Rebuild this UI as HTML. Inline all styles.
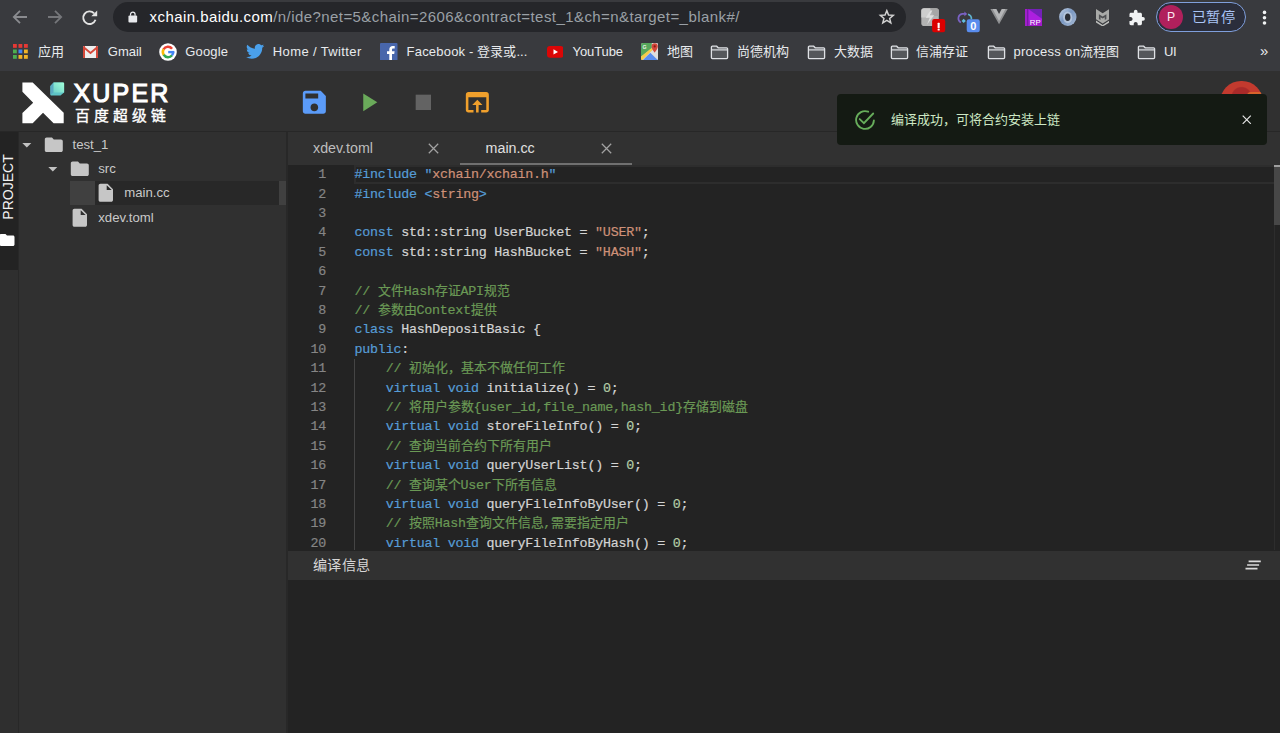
<!DOCTYPE html>
<html lang="zh-CN">
<head>
<meta charset="utf-8">
<title>XUPER IDE</title>
<style>
*{box-sizing:border-box;margin:0;padding:0}
html,body{width:1280px;height:733px;overflow:hidden;background:#232323}
body{font-family:"Liberation Sans",sans-serif;color:#ddd;position:relative}
.abs{position:absolute}
svg{display:block}
/* ---------- browser chrome ---------- */
#chrome{position:absolute;left:0;top:0;width:1280px;height:71px;background:#393a3e}
#omni{position:absolute;left:113px;top:2px;width:793px;height:30px;border-radius:15px;background:#25262a}
#url{position:absolute;left:149.6px;top:0;height:34px;line-height:34px;font-size:15px;letter-spacing:.43px;color:#9aa0a6;white-space:nowrap}
#url b{font-weight:normal;color:#fff}
.bm{position:absolute;top:36px;height:31px;line-height:31px;font-size:13px;color:#e8eaed;white-space:nowrap}
.bmi{position:absolute}
#prof{position:absolute;left:1156px;top:2.2px;width:90px;height:30px;border-radius:15px;border:1.3px solid #7f9fdc;background:#2b2e3b}
#prof .av{position:absolute;left:1.9px;top:1.6px;width:24.2px;height:24.2px;border-radius:50%;background:#b0205c;color:#fbe9f0;font-size:12.2px;line-height:25px;text-align:center}
#prof .tx{position:absolute;left:35px;top:1px;line-height:27.4px;font-size:14.2px;color:#a9c4f5;white-space:nowrap}
/* ---------- app ---------- */
#hdr{position:absolute;left:0;top:71px;width:1280px;height:60.5px;background:#303030}
#hdrline{position:absolute;left:0;top:131.2px;width:1280px;height:1.1px;background:#272727}
#act{position:absolute;left:0;top:132px;width:17.5px;height:601px;background:#2f2f2f}
#acttab{position:absolute;left:0;top:132px;width:17.5px;height:137.8px;background:#232323}
#side{position:absolute;left:17.5px;top:132px;width:269px;height:601px;background:#303030;border-left:1px solid #282828}
#sideline{position:absolute;left:286px;top:132px;width:1.5px;height:601px;background:#282828}
.trow{position:absolute;font-size:13.2px;color:#c9c9c9;white-space:nowrap;line-height:24.3px;height:24.3px}
#tabs{position:absolute;left:287.5px;top:132.2px;width:993px;height:32.5px;background:#313131}
.tab{position:absolute;top:.3px;height:32px;line-height:33px;font-size:14.25px;color:#bdbdbd;white-space:nowrap}
#editor{position:absolute;left:287.5px;top:164.7px;width:993px;height:385.8px;background:#232323;overflow:hidden}
.ln{position:absolute;left:0;width:38.5px;text-align:right;color:#858585}
.cl{position:absolute;left:67.1px;white-space:pre;color:#d4d4d4}
.ln,.cl{font-family:"Liberation Mono",monospace;font-size:13.33px;letter-spacing:-.24px;height:19.39px;line-height:19.39px;margin-top:.6px;-webkit-text-stroke:.2px}
.z{font-size:12.9px;letter-spacing:0}.j{display:inline-block;text-align:justify;text-align-last:justify;white-space:nowrap}.k{color:#569cd6}.s{color:#ce9178}.c{color:#6a9955}.n{color:#b5cea8}
#phead{position:absolute;left:287.5px;top:550.5px;width:993px;height:29.3px;background:#313131}
#pbody{position:absolute;left:287.5px;top:579.8px;width:993px;height:153.2px;background:#232323}
/* ---------- toast ---------- */
#toast{position:absolute;left:836.5px;top:93.7px;width:430.2px;height:51px;border-radius:4px;background:#141a13}
</style>
</head>
<body>

<!-- ================= BROWSER CHROME ================= -->
<div id="chrome">
  <div id="omni"></div>
  <div id="url"><b>xchain.baidu.com</b>/n/ide?net=5&amp;chain=2606&amp;contract=test_1&amp;ch=n&amp;target=_blank#/</div>

  <!-- nav buttons -->
  <svg class="abs" style="left:12px;top:9px" width="16" height="16" viewBox="0 0 16 16"><path d="M15 8H2.2M8 1.8L1.8 8 8 14.2" fill="none" stroke="#8a8b8f" stroke-width="1.8"/></svg>
  <svg class="abs" style="left:47px;top:9px" width="16" height="16" viewBox="0 0 16 16"><path d="M1 8h12.8M8 1.8L14.2 8 8 14.2" fill="none" stroke="#75767a" stroke-width="1.8"/></svg>
  <svg class="abs" style="left:81px;top:9px" width="17" height="17" viewBox="0 0 17 17"><path d="M13.1 4.3A6.3 6.3 0 1 0 14.5 10.8" fill="none" stroke="#e3e3e3" stroke-width="1.9"/><path d="M16.2 1.4v5.9h-5.9z" fill="#e3e3e3"/></svg>
  <!-- lock -->
  <svg class="abs" style="left:128.1px;top:11.2px" width="9.6" height="12.2" viewBox="0 0 11 14"><rect x="0.5" y="5.2" width="10" height="8" rx="1.2" fill="#e8eaed"/><path d="M2.9 5.5V3.8a2.6 2.6 0 0 1 5.2 0v1.7" fill="none" stroke="#e8eaed" stroke-width="1.4"/></svg>
  <!-- star -->
  <svg class="abs" style="left:878.4px;top:8px" width="17.6" height="17.6" viewBox="0 0 24 24"><path d="M12.0 3.6L14.4 9.6L20.8 10.0L15.9 14.2L17.5 20.4L12.0 17.0L6.5 20.4L8.1 14.2L3.2 10.0L9.6 9.6Z" fill="none" stroke="#d2d2d2" stroke-width="2" stroke-linejoin="miter"/></svg>
  <!-- ext 1: grey card with bolt + red badge -->
  <svg class="abs" style="left:920px;top:7px" width="26" height="26" viewBox="0 0 26 26"><rect x="1.3" y="1.3" width="17.5" height="17.8" rx="2.8" fill="#b3b3b3"/><path d="M1.3 4.1a2.8 2.8 0 0 1 2.8-2.8h6.5L8 10.5H1.3z" fill="#cdcdcd"/><path d="M10.6 1.3h5.4a2.8 2.8 0 0 1 2.8 2.8v5L13.5 9z" fill="#a6a6a6"/><path d="M10.2 3.5L5.8 10.8h4L7 17.5l7.2-9.3h-4.4l2.5-4.7z" fill="#dedede"/><rect x="12.1" y="12" width="13.1" height="13.2" rx="2.2" fill="#dc0000"/><rect x="17.6" y="15.8" width="2.1" height="5.4" rx=".5" fill="#fff"/><rect x="17.6" y="21.8" width="2.1" height="1.6" rx=".5" fill="#fff"/></svg>
  <!-- ext 2: sync arrows + blue badge -->
  <svg class="abs" style="left:956px;top:7px" width="26" height="26" viewBox="0 0 26 26"><g transform="translate(-.3 1.3)"><path d="M5.2 14.1A4.5 4.5 0 0 1 6.5 5.6H9.2" fill="none" stroke="#7a62c4" stroke-width="1.7"/><path d="M8.7 3.2l2.800 2.4-2.800 2.4z" fill="#7a62c4"/><path d="M12.4 5.9a5 5 0 0 1 3.3 5.2" fill="none" stroke="#5fb4d0" stroke-width="1.7"/><path d="M8 10.5l2.1 2.1L8 14.7l-2.1-2.1z" fill="#62bfe0"/></g><rect x="10.7" y="12.2" width="13.1" height="13" rx="2.2" fill="#5a8dee"/><text x="17.25" y="22.8" font-family="Liberation Sans" font-size="11" font-weight="bold" fill="#fff" text-anchor="middle">0</text></svg>
  <!-- ext 3: V -->
  <svg class="abs" style="left:989.9px;top:8.4px" width="18.1" height="16.7" viewBox="0 0 22 18" preserveAspectRatio="none"><path d="M.5 1h5L11 10.5 16.5 1h5L11 17.5z" fill="#8f9092"/><path d="M3.2 1h4.6L11 6.5 14.2 1h4.6L11 14z" fill="#b4b5b7"/></svg>
  <!-- ext 4: RP -->
  <svg class="abs" style="left:1024.8px;top:8.6px" width="17.3" height="17.3" viewBox="0 0 19 19"><rect width="19" height="19" fill="#ad1fe0"/><path d="M3.6 0H19V11z" fill="#7420b8"/><path d="M0 0h2.6v19H0z" fill="#a11fc9"/><path d="M2.6 0h1v19h-1z" fill="#5d1390"/><path d="M3.6 13h15.4v6H3.6z" fill="#9a1bbd" opacity=".6"/><text x="11.3" y="17.3" font-family="Liberation Sans" font-size="8.6" fill="#fff" text-anchor="middle">RP</text></svg>
  <!-- ext 5: ring -->
  <svg class="abs" style="left:1059px;top:8px" width="17.6" height="18" viewBox="0 0 17.6 18"><defs><linearGradient id="rg" x1="0" y1="0" x2="1" y2="1"><stop offset="0" stop-color="#c9d6e8"/><stop offset=".45" stop-color="#7b98c2"/><stop offset="1" stop-color="#a9bcd6"/></linearGradient></defs><ellipse cx="8.8" cy="9" rx="8.7" ry="8.9" fill="url(#rg)"/><ellipse cx="8.7" cy="9.4" rx="4.6" ry="5.8" fill="#d5deeb" opacity=".55"/><ellipse cx="8.7" cy="9.3" rx="2.7" ry="3.8" fill="#2b2e36"/></svg>
  <!-- ext 6: shield -->
  <svg class="abs" style="left:1095.9px;top:8.6px" width="13.3" height="17.6" viewBox="0 0 13.3 17.6"><path d="M0 0L6.65 4.3 13.3 0V10.2L6.65 14.5 0 10.2z" fill="#a9aaa8"/><path d="M2.9 5.2L6.65 7.6 10.4 5.2V10l-1.6 1V8.2L6.65 9.6 4.5 8.2V11l-1.6-1z" fill="#505154"/><path d="M0 11.6L6.65 15.9 13.3 11.6v1.9L6.65 17.6 0 13.5z" fill="#bdbebc"/></svg>
  <!-- ext 7: puzzle -->
  <svg class="abs" style="left:1127.8px;top:8.6px" width="17.6" height="17.6" viewBox="0 0 24 24"><path d="M20.5 11H19V7c0-1.1-.9-2-2-2h-4V3.5a2.5 2.5 0 0 0-5 0V5H4c-1.1 0-2 .9-2 2v3.8h1.5c1.5 0 2.7 1.2 2.7 2.7S5 16.2 3.5 16.2H2V20c0 1.1.9 2 2 2h3.8v-1.5c0-1.5 1.2-2.7 2.7-2.7s2.7 1.2 2.7 2.7V22H17c1.1 0 2-.9 2-2v-4h1.5a2.5 2.5 0 0 0 0-5z" fill="#f1f3f4"/></svg>
  <!-- menu dots -->
  <svg class="abs" style="left:1262.4px;top:9.5px" width="5" height="16" viewBox="0 0 5 16"><circle cx="2.5" cy="2.4" r="1.8" fill="#f1f3f4"/><circle cx="2.5" cy="7.7" r="1.8" fill="#f1f3f4"/><circle cx="2.5" cy="13" r="1.8" fill="#f1f3f4"/></svg>

  <!-- bookmarks bar -->
  <svg class="bmi" style="left:13px;top:43.8px" width="15" height="15" viewBox="0 0 15 15"><g><rect x="0" y="0" width="3.8" height="3.8" fill="#e53935"/><rect x="5.5" y="0" width="3.8" height="3.8" fill="#e53935"/><rect x="11" y="0" width="3.8" height="3.8" fill="#e53935"/><rect x="0" y="5.5" width="3.8" height="3.8" fill="#4caf50"/><rect x="5.5" y="5.5" width="3.8" height="3.8" fill="#4285f4"/><rect x="11" y="5.5" width="3.8" height="3.8" fill="#f0b429"/><rect x="0" y="11" width="3.8" height="3.8" fill="#4caf50"/><rect x="5.5" y="11" width="3.8" height="3.8" fill="#f0b429"/><rect x="11" y="11" width="3.8" height="3.8" fill="#f0b429"/></g></svg>
  <div class="bm" style="left:38px"><span class="j" style="width:26px">应用</span></div>
  <svg class="bmi" style="left:83px;top:45.5px" width="15" height="12.5" viewBox="0 0 15 12.5"><rect x="0" y="0" width="15" height="12.5" rx="1" fill="#eee"/><path d="M0 1a1 1 0 0 1 1-1h1v12.5H1a1 1 0 0 1-1-1zM15 1a1 1 0 0 0-1-1h-1v12.5h1a1 1 0 0 0 1-1z" fill="#d5483a"/><path d="M1 .2l6.5 5.6L14 .2v2.6L7.5 8.2 1 2.8z" fill="#d5483a"/></svg>
  <div class="bm" style="left:107.8px;letter-spacing:-0.03px">Gmail</div>
  <svg class="bmi" style="left:158.5px;top:43px" width="18" height="18" viewBox="0 0 18 18"><circle cx="9" cy="9" r="8.8" fill="#fff"/><path d="M13.06 5.83A5.15 5.15 0 0 0 4.54 6.43" fill="none" stroke="#ea4335" stroke-width="2.5"/><path d="M4.63 6.27A5.15 5.15 0 0 0 4.78 11.95" fill="none" stroke="#fbbc05" stroke-width="2.5"/><path d="M4.68 11.8A5.15 5.15 0 0 0 13.06 12.17" fill="none" stroke="#34a853" stroke-width="2.5"/><path d="M12.95 12.31A5.15 5.15 0 0 0 14.15 8.82" fill="none" stroke="#4285f4" stroke-width="2.5"/><path d="M9.2 7.9h6.1v2.4H9.2z" fill="#4285f4"/></svg>
  <div class="bm" style="left:185.3px;letter-spacing:.15px">Google</div>
  <svg class="bmi" style="left:246.2px;top:44.3px" width="18.2" height="15" viewBox="0 0 24 20"><path d="M24 2.4a9.6 9.6 0 0 1-2.8.8A5 5 0 0 0 23.3.5a9.8 9.8 0 0 1-3.1 1.2 4.9 4.9 0 0 0-8.4 4.5A14 14 0 0 1 1.7 1a4.9 4.9 0 0 0 1.5 6.6 4.9 4.9 0 0 1-2.2-.6 4.9 4.9 0 0 0 3.9 4.9 4.9 4.9 0 0 1-2.2.1 4.9 4.9 0 0 0 4.6 3.4A9.9 9.9 0 0 1 0 17.4 14 14 0 0 0 7.5 19.6c9.1 0 14-7.5 14-14v-.6A10 10 0 0 0 24 2.4z" fill="#4aa0eb"/></svg>
  <div class="bm" style="left:272.8px;letter-spacing:.38px">Home / Twitter</div>
  <svg class="bmi" style="left:380px;top:42.8px" width="17.5" height="17.5" viewBox="0 0 17.5 17.5"><rect width="17.5" height="17.5" rx="1" fill="#4866ab"/><path d="M12 17.5v-6.5h2.2l.4-2.7H12V6.7c0-.8.3-1.3 1.4-1.3h1.3V3a17 17 0 0 0-2-.1c-2 0-3.4 1.2-3.4 3.5v1.9H7v2.7h2.3v6.5z" fill="#fff"/></svg>
  <div class="bm" style="left:406.6px"><span style="letter-spacing:.2px">Facebook - </span><span class="j" style="width:39px">登录或</span>...</div>
  <svg class="bmi" style="left:546.5px;top:45.8px" width="16.5" height="11.8" viewBox="0 0 16.5 11.8"><rect width="16.5" height="11.8" rx="3" fill="#db0606"/><path d="M6.5 3.3l4.5 2.6-4.5 2.6z" fill="#fff"/></svg>
  <div class="bm" style="left:572.5px;letter-spacing:-.1px">YouTube</div>
  <svg class="bmi" style="left:640.5px;top:43.3px" width="17.5" height="17" viewBox="0 0 17.5 17"><rect width="17.5" height="17" rx="2" fill="#dedede"/><path d="M0 2a2 2 0 0 1 2-2h8.8v5.3L0 14z" fill="#57a85c"/><path d="M0 13.6L10.6 5l1.5 1.6L1.3 17H1a1 1 0 0 1-1-1z" fill="#f5cb4a"/><path d="M2 17l7.3-7.2L16.7 17z" fill="#5a8dee"/><path d="M13.7.3a3.1 3.1 0 0 0-3.1 3.1c0 2.3 3.1 6.2 3.1 6.2s3.1-3.9 3.1-6.2A3.1 3.1 0 0 0 13.7.3z" fill="#d4483b"/><circle cx="13.7" cy="3.4" r="1.1" fill="#8a1c14"/><text x="1.4" y="6.2" font-family="Liberation Sans" font-weight="bold" font-size="5.2" fill="#e8f3e8">G</text></svg>
  <div class="bm" style="left:666.9px"><span class="j" style="width:26px">地图</span></div>
  <svg class="bmi" style="left:709.5px;top:44.5px" width="19" height="15" viewBox="0 0 19 15"><path d="M1.4 2.2c0-.6.4-1 1-1h4.3l1.5 1.6h8.4c.6 0 1 .4 1 1v8.8c0 .6-.4 1-1 1H2.4c-.6 0-1-.4-1-1z" fill="#55575b" stroke="#dfe1e5" stroke-width="1.3"/><path d="M1.4 4.9h16.2" stroke="#dfe1e5" stroke-width="1.2"/></svg>
  <div class="bm" style="left:736.9px"><span class="j" style="width:52px">尚德机构</span></div>
  <svg class="bmi" style="left:806.5px;top:44.5px" width="19" height="15" viewBox="0 0 19 15"><path d="M1.4 2.2c0-.6.4-1 1-1h4.3l1.5 1.6h8.4c.6 0 1 .4 1 1v8.8c0 .6-.4 1-1 1H2.4c-.6 0-1-.4-1-1z" fill="#55575b" stroke="#dfe1e5" stroke-width="1.3"/><path d="M1.4 4.9h16.2" stroke="#dfe1e5" stroke-width="1.2"/></svg>
  <div class="bm" style="left:833.75px"><span class="j" style="width:39px">大数据</span></div>
  <svg class="bmi" style="left:889.5px;top:44.5px" width="19" height="15" viewBox="0 0 19 15"><path d="M1.4 2.2c0-.6.4-1 1-1h4.3l1.5 1.6h8.4c.6 0 1 .4 1 1v8.8c0 .6-.4 1-1 1H2.4c-.6 0-1-.4-1-1z" fill="#55575b" stroke="#dfe1e5" stroke-width="1.3"/><path d="M1.4 4.9h16.2" stroke="#dfe1e5" stroke-width="1.2"/></svg>
  <div class="bm" style="left:916.25px"><span class="j" style="width:52px">信浦存证</span></div>
  <svg class="bmi" style="left:986.5px;top:44.5px" width="19" height="15" viewBox="0 0 19 15"><path d="M1.4 2.2c0-.6.4-1 1-1h4.3l1.5 1.6h8.4c.6 0 1 .4 1 1v8.8c0 .6-.4 1-1 1H2.4c-.6 0-1-.4-1-1z" fill="#55575b" stroke="#dfe1e5" stroke-width="1.3"/><path d="M1.4 4.9h16.2" stroke="#dfe1e5" stroke-width="1.2"/></svg>
  <div class="bm" style="left:1013.4px"><span style="letter-spacing:.32px">process on</span><span class="j" style="width:39px">流程图</span></div>
  <svg class="bmi" style="left:1137px;top:44.5px" width="19" height="15" viewBox="0 0 19 15"><path d="M1.4 2.2c0-.6.4-1 1-1h4.3l1.5 1.6h8.4c.6 0 1 .4 1 1v8.8c0 .6-.4 1-1 1H2.4c-.6 0-1-.4-1-1z" fill="#55575b" stroke="#dfe1e5" stroke-width="1.3"/><path d="M1.4 4.9h16.2" stroke="#dfe1e5" stroke-width="1.2"/></svg>
  <div class="bm" style="left:1164px;letter-spacing:-.5px">UI</div>
  <div class="bm" style="left:1260px;font-size:15px;top:35px">»</div>
  <div id="prof"><div class="av">P</div><div class="tx j" style="width:42.6px">已暂停</div></div>
</div>

<!-- ================= APP ================= -->
<div id="hdr">
  <!-- logo -->
  <svg class="abs" style="left:22px;top:10.5px" width="43" height="42" viewBox="0 0 43 42"><defs><linearGradient id="cg" x1="0" y1="1" x2="1" y2="0"><stop offset="0" stop-color="#6fd2c8"/><stop offset="1" stop-color="#a2ffd9"/></linearGradient></defs><path d="M.4.5H10.7L41.7 30.7V41.3H31.6L21 30.7 10.7 41.3H.4V31L11.2 20.7.4 9.7Z" fill="#fff"/><path d="M31.6.4H41a1.1 1.1 0 0 1 1.1 1.1V10.4L38.5 13.5H29.2a.8.8 0 0 1-.8-.8V4Z" fill="#5ec4c6"/><path d="M31.6.4L28.4 4V12.7l3.2-2.2Z" fill="#5aaac2"/><path d="M31.6.4H41a1.1 1.1 0 0 1 1.1 1.1V10.4H31.6Z" fill="url(#cg)"/></svg>
  <div class="abs" style="left:73.4px;top:7.4px;font-size:25px;line-height:30px;letter-spacing:2.2px;color:#fff;white-space:nowrap;-webkit-text-stroke:1.1px #fff">XUPER</div>
  <div class="abs" style="left:74.7px;top:34.8px;width:91.4px;font-size:14.8px;line-height:20px;color:#fff;white-space:nowrap;text-align:justify;text-align-last:justify;-webkit-text-stroke:0.4px #fff">百度超级链</div>
  <svg class="abs" style="left:299.15px;top:15.95px" width="30.7" height="30.7" viewBox="0 0 24 24"><path d="M17 3H5c-1.11 0-2 .9-2 2v14c0 1.1.89 2 2 2h14c1.1 0 2-.9 2-2V7l-4-4zm-5 16c-1.66 0-3-1.34-3-3s1.34-3 3-3 3 1.34 3 3-1.34 3-3 3zm3-10H5V5h10v4z" fill="#5b9bf8"/></svg>
  <svg class="abs" style="left:353.45px;top:15.95px" width="30.7" height="30.7" viewBox="0 0 24 24"><path d="M8 5v14l11-7z" fill="#6aaa5a"/></svg>
  <svg class="abs" style="left:407.75px;top:15.95px" width="30.7" height="30.7" viewBox="0 0 24 24"><path d="M6 6h12v12H6z" fill="#636363"/></svg>
  <svg class="abs" style="left:462.05px;top:15.95px" width="30.7" height="30.7" viewBox="0 0 24 24"><path d="M19 4H5c-1.11 0-2 .9-2 2v12c0 1.1.89 2 2 2h4v-2H5V8h14v10h-4v2h4c1.1 0 2-.9 2-2V6c0-1.1-.89-2-2-2zm-7 6l-4 4h3v6h2v-6h3l-4-4z" fill="#f0a02c"/></svg>
  <div class="abs" style="left:1220px;top:9.6px;width:42.5px;height:42.5px;border-radius:50%;overflow:hidden;background:radial-gradient(circle at 50% 38%,#a92a29 0,#a92a29 9.3px,#c33a2e 10.6px,#c33a2e 100%)"><div class="abs" style="left:27px;top:11px;width:18px;height:8px;background:#d8622b;border-radius:4px 0 0 0"></div></div>
</div>
<div id="hdrline"></div>
<div id="act"></div>
<div id="acttab">
  <div class="abs" style="left:-24.9px;top:45.8px;width:65.3px;height:18px;line-height:18px;font-size:14px;color:#f2f2f2;transform:rotate(-90deg);transform-origin:50% 50%;white-space:nowrap;text-align:center">PROJECT</div>
  <svg class="abs" style="left:-2px;top:98.8px" width="18" height="18" viewBox="0 0 24 24"><path d="M10 4H4c-1.1 0-2 .9-2 2v12c0 1.1.9 2 2 2h16c1.1 0 2-.9 2-2V8c0-1.1-.9-2-2-2h-8l-2-2z" fill="#fff"/></svg>
</div>
<div id="side">
  <div class="abs" style="left:51.5px;top:48.8px;width:217px;height:24.7px;background:#282828"></div>
  <div class="abs" style="left:51.5px;top:48.8px;width:25.1px;height:24.7px;background:#404040"></div>
  <div class="abs" style="left:260.5px;top:48.8px;width:7.3px;height:24.7px;background:#404040"></div>
  <svg class="abs" style="left:-2.3px;top:1.8px" width="21.6" height="21.6" viewBox="0 0 24 24"><path d="M7 10l5 5 5-5z" fill="#c2c2c2"/></svg>
  <svg class="abs" style="left:24.45px;top:1.8px" width="21.6" height="21.6" viewBox="0 0 24 24"><path d="M10 4H4c-1.1 0-2 .9-2 2v12c0 1.1.9 2 2 2h16c1.1 0 2-.9 2-2V8c0-1.1-.9-2-2-2h-8l-2-2z" fill="#c6c6c6"/></svg>
  <div class="trow" style="left:54px;top:0.75px">test_1</div>
  <svg class="abs" style="left:23.5px;top:26.1px" width="21.6" height="21.6" viewBox="0 0 24 24"><path d="M7 10l5 5 5-5z" fill="#c2c2c2"/></svg>
  <svg class="abs" style="left:50.45px;top:26.1px" width="21.6" height="21.6" viewBox="0 0 24 24"><path d="M10 4H4c-1.1 0-2 .9-2 2v12c0 1.1.9 2 2 2h16c1.1 0 2-.9 2-2V8c0-1.1-.9-2-2-2h-8l-2-2z" fill="#c6c6c6"/></svg>
  <div class="trow" style="left:79.75px;top:25.05px">src</div>
  <svg class="abs" style="left:76.3px;top:50.4px" width="21.6" height="21.6" viewBox="0 0 24 24"><path d="M6 2c-1.1 0-1.99.9-1.99 2L4 20c0 1.1.89 2 1.99 2H18c1.1 0 2-.9 2-2V8l-6-6H6zm7 7V3.5L18.5 9H13z" fill="#c6c6c6"/></svg>
  <div class="trow" style="left:105.75px;top:49.35px">main.cc</div>
  <svg class="abs" style="left:50.2px;top:75.2px" width="21.6" height="21.6" viewBox="0 0 24 24"><path d="M6 2c-1.1 0-1.99.9-1.99 2L4 20c0 1.1.89 2 1.99 2H18c1.1 0 2-.9 2-2V8l-6-6H6zm7 7V3.5L18.5 9H13z" fill="#c6c6c6"/></svg>
  <div class="trow" style="left:79.75px;top:73.75px">xdev.toml</div>
</div>
<div id="sideline"></div>
<div id="tabs">
  <div class="tab" style="left:25.5px">xdev.toml</div>
  <svg class="abs" style="left:140.7px;top:10.8px" width="11" height="11" viewBox="0 0 11 11"><path d="M.8.8l9.4 9.4M10.2.800L.8 10.2" stroke="#a2a2a2" stroke-width="1.25" fill="none"/></svg>
  <div class="tab" style="left:198.1px;color:#e0e0e0">main.cc</div>
  <svg class="abs" style="left:313px;top:10.8px" width="11" height="11" viewBox="0 0 11 11"><path d="M.8.8l9.4 9.4M10.2.800L.8 10.2" stroke="#a2a2a2" stroke-width="1.25" fill="none"/></svg>
</div>
<div class="abs" style="left:459.7px;top:162.6px;width:172.4px;height:2px;background:#707070;z-index:5"></div>
<div id="editor">
  <div class="abs" style="left:66.5px;top:0;width:940px;height:19.39px;border:2px solid #2d2d2d"></div>
  <div class="abs" style="left:66.8px;top:193.9px;width:1px;height:193px;background:#454545"></div>
  <div class="ln" style="top:0.00px">1</div><div class="cl" style="top:0.00px"><span class="k">#include</span> <span class="k">&quot;</span><span class="s">xchain/xchain.h</span><span class="k">&quot;</span></div>
  <div class="ln" style="top:19.39px">2</div><div class="cl" style="top:19.39px"><span class="k">#include</span> <span class="k">&lt;</span><span class="s">string</span><span class="k">&gt;</span></div>
  <div class="ln" style="top:38.78px">3</div><div class="cl" style="top:38.78px"></div>
  <div class="ln" style="top:58.17px">4</div><div class="cl" style="top:58.17px"><span class="k">const</span> std::string UserBucket = <span class="s">&quot;USER&quot;</span>;</div>
  <div class="ln" style="top:77.56px">5</div><div class="cl" style="top:77.56px"><span class="k">const</span> std::string HashBucket = <span class="s">&quot;HASH&quot;</span>;</div>
  <div class="ln" style="top:96.95px">6</div><div class="cl" style="top:96.95px"></div>
  <div class="ln" style="top:116.34px">7</div><div class="cl" style="top:116.34px"><span class="c">// <span class="z j" style="width:25.8px">文件</span>Hash<span class="z j" style="width:25.8px">存证</span>API<span class="z j" style="width:25.8px">规范</span></span></div>
  <div class="ln" style="top:135.73px">8</div><div class="cl" style="top:135.73px"><span class="c">// <span class="z j" style="width:38.7px">参数由</span>Context<span class="z j" style="width:25.8px">提供</span></span></div>
  <div class="ln" style="top:155.12px">9</div><div class="cl" style="top:155.12px"><span class="k">class</span> HashDepositBasic {</div>
  <div class="ln" style="top:174.51px">10</div><div class="cl" style="top:174.51px"><span class="k">public</span>:</div>
  <div class="ln" style="top:193.90px">11</div><div class="cl" style="top:193.90px">    <span class="c">// <span class="z j" style="width:154.8px">初始化，基本不做任何工作</span></span></div>
  <div class="ln" style="top:213.29px">12</div><div class="cl" style="top:213.29px">    <span class="k">virtual</span> <span class="k">void</span> initialize() = <span class="n">0</span>;</div>
  <div class="ln" style="top:232.68px">13</div><div class="cl" style="top:232.68px">    <span class="c">// <span class="z j" style="width:64.5px">将用户参数</span>{user_id,file_name,hash_id}<span class="z j" style="width:64.5px">存储到磁盘</span></span></div>
  <div class="ln" style="top:252.07px">14</div><div class="cl" style="top:252.07px">    <span class="k">virtual</span> <span class="k">void</span> storeFileInfo() = <span class="n">0</span>;</div>
  <div class="ln" style="top:271.46px">15</div><div class="cl" style="top:271.46px">    <span class="c">// <span class="z j" style="width:141.9px">查询当前合约下所有用户</span></span></div>
  <div class="ln" style="top:290.85px">16</div><div class="cl" style="top:290.85px">    <span class="k">virtual</span> <span class="k">void</span> queryUserList() = <span class="n">0</span>;</div>
  <div class="ln" style="top:310.24px">17</div><div class="cl" style="top:310.24px">    <span class="c">// <span class="z j" style="width:51.6px">查询某个</span>User<span class="z j" style="width:64.5px">下所有信息</span></span></div>
  <div class="ln" style="top:329.63px">18</div><div class="cl" style="top:329.63px">    <span class="k">virtual</span> <span class="k">void</span> queryFileInfoByUser() = <span class="n">0</span>;</div>
  <div class="ln" style="top:349.02px">19</div><div class="cl" style="top:349.02px">    <span class="c">// <span class="z j" style="width:25.8px">按照</span>Hash<span class="z j" style="width:77.4px">查询文件信息</span>,<span class="z j" style="width:77.4px">需要指定用户</span></span></div>
  <div class="ln" style="top:368.41px">20</div><div class="cl" style="top:368.41px">    <span class="k">virtual</span> <span class="k">void</span> queryFileInfoByHash() = <span class="n">0</span>;</div>
  <div class="abs" style="left:986px;top:0;width:7px;height:386px;background:#232323;border-left:1px solid #2d2d2d"></div>
  <div class="abs" style="left:986.5px;top:0.2px;width:6.5px;height:60px;background:#474747"></div>
  <div class="abs" style="left:986.5px;top:0.2px;width:6.5px;height:2px;background:#a0a0a0"></div>
</div>
<div id="phead">
  <div class="abs" style="left:25.5px;top:-.6px;width:56.8px;text-align:justify;text-align-last:justify;line-height:30px;font-size:14.2px;color:#d6d6d6;white-space:nowrap">编译信息</div>
  <svg class="abs" style="left:957px;top:9.5px" width="17" height="11" viewBox="0 0 17 11"><path d="M3.6 1.4h12.2M2.1 5h12M.5 8.6h12" stroke="#dadada" stroke-width="1.7" fill="none"/></svg>
</div>
<div id="pbody"></div>
<div id="toast">
  <svg class="abs" style="left:18.7px;top:16.1px" width="20" height="20" viewBox="0 0 20 20"><path d="M18.89 10.47A8.9 8.9 0 1 1 13.16 1.68" fill="none" stroke="#67ad5b" stroke-width="1.85" stroke-linecap="round"/><path d="M4.7 9.1l4.2 4L18.2 3.5" fill="none" stroke="#67ad5b" stroke-width="1.85" stroke-linecap="round" stroke-linejoin="miter"/></svg>
  <div class="abs" style="left:54.3px;top:16.8px;width:169px;text-align:justify;text-align-last:justify;line-height:20px;font-size:13px;color:#cde8c4;white-space:nowrap">编译成功，可将合约安装上链</div>
  <svg class="abs" style="left:405.8px;top:21px" width="9.5" height="9.5" viewBox="0 0 9.5 9.5"><path d="M.7.7l8.1 8.1M8.8.700L.7 8.8" stroke="#e6e6e6" stroke-width="1.2" fill="none"/></svg>
</div>

</body>
</html>
